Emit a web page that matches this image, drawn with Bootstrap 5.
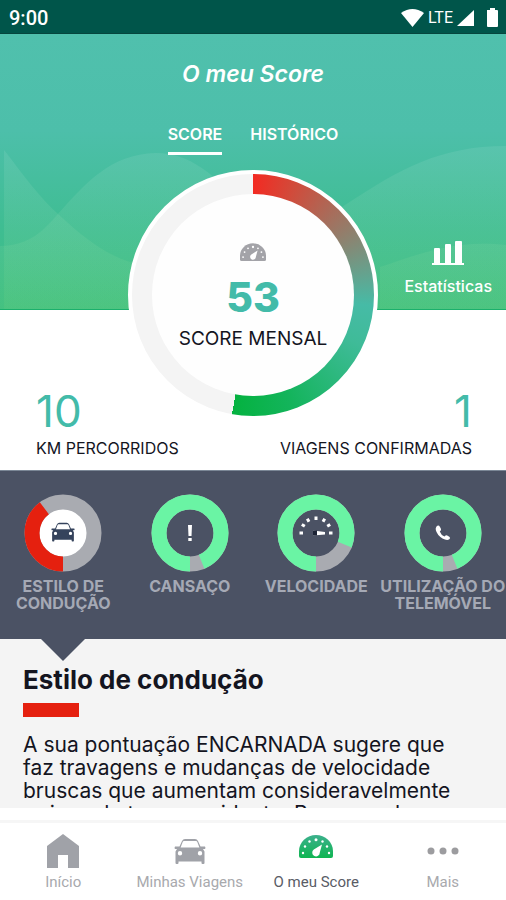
<!DOCTYPE html>
<html lang="pt">
<head>
<meta charset="utf-8">
<meta name="viewport" content="width=device-width, initial-scale=1">
<title>O meu Score</title>
<link href="https://cdn.jsdelivr.net/npm/bootstrap@5.3.0/dist/css/bootstrap.min.css" rel="stylesheet">
<style>
body { font-family: Inter, "Noto Sans", sans-serif; color: #14151f; }
button { font: inherit; }
.status-bar { background: #00554a; height: 34px; font-family: Roboto, sans-serif; font-size: 16px; padding: 2px 7px 0 9px; border-bottom: 1px solid #06463e; }
.clock { font-size: 20px; font-weight: 500; }
.hero-bg { height: 276px; z-index: 0; }
.hero-body { z-index: 1; }
.screen-title { font-size: 23px; font-weight: 600; font-style: italic; line-height: 28px; padding-top: 26px; }
.score-tabs { gap: 28px; padding-top: 32px; }
.score-tab { font-size: 16px; font-weight: 600; line-height: 28px; padding-bottom: 4px; border-bottom: 3px solid transparent; text-decoration: none; }
.score-tab.active { border-color: #fff; }
.dial-row { display: grid; grid-template-columns: 1fr auto 1fr; margin-top: 15px; }
.dial { width: 250px; height: 250px; border: 4px solid #fff; background: conic-gradient(#f32a22 0deg, #d24a3a 20deg, #8b8471 60deg, #46bba6 95deg, #3fbb98 115deg, #14b45c 160deg, #04b240 190deg, #f4f4f4 190deg); padding: 20px; }
.dial-face { background: #fefefe; padding-top: 49px; }
.dial-value { font-size: 41px; font-weight: 800; line-height: 46px; color: #43bba9; margin-top: 12px; }
.dial-label { font-size: 19px; line-height: 26px; margin-top: 6px; }
.stats-link { font-size: 16px; font-weight: 500; line-height: 20px; padding: 0 14px 56px 0; align-self: center; }
.totals { padding: 0 34px 9px 36px; margin-top: -33px; }
.total-value { font-size: 44px; line-height: 48px; color: #43bba9; }
.total-label { font-size: 16px; line-height: 26px; }
.factors { background: #4b5264; border-top: 1px solid #7b8796; padding: 23px 0 26px; }
.factor { color: #a5a9b5; font-size: 16px; font-weight: 700; line-height: 17px; flex: 1 1 0; min-width: 0; white-space: nowrap; }
.factor svg { margin-bottom: 6px; }
.factor span { margin-bottom: 1px; }
.pointer { left: 0; width: 25%; top: 100%; z-index: 2; }
.detail { background: #f4f4f4; padding: 24px 23px 0; }
.detail-title { font-size: 26px; font-weight: 700; line-height: 34px; }
.level { width: 56px; height: 14px; background: #e5200f; margin-top: 6px; }
.detail-text { font-size: 21px; line-height: 23px; margin-top: 16px; white-space: nowrap; }
.tab-bar { font-family: Roboto, sans-serif; font-size: 15px; line-height: 20px; margin-top: 12px; border-top: 3px solid #f6f6f6; padding: 9px 0 8px; color: #a8a9ad; }
.tab-item { flex: 1 1 0; color: inherit; text-decoration: none; white-space: nowrap; }
.tab-item svg { margin-bottom: 2px; }
.tab-item.active { color: #595c66; }
</style>
<script src="https://cdn.jsdelivr.net/npm/bootstrap@5.3.0/dist/js/bootstrap.bundle.min.js"></script>
</head>
<body class="vh-100 d-flex flex-column overflow-hidden bg-white">
<svg width="0" height="0" class="position-absolute" aria-hidden="true">
  <symbol id="car" viewBox="0 0 32 28">
    <path fill-rule="evenodd" d="M8 3Q9 1 11 1H21Q23 1 24 3L26.500 8.500L31 8.500Q32 10 31 11H29L30.500 13.500V25Q30.500 26 29.500 26H28.500Q27.500 26 27.500 25V23.500H4.500V25Q4.500 26 3.500 26H2.500Q1.500 26 1.500 25V13.500L3 11H1Q0 10 1 8.500L5.500 8.500ZM10 3Q9 3 8.700 4L6.600 9.500H25.400L23.300 4Q23 3 22 3ZM6 13A2.200 2.200 0 1 0 6 17.400A2.200 2.200 0 1 0 6 13ZM26 13A2.200 2.200 0 1 0 26 17.400A2.200 2.200 0 1 0 26 13Z"/>
  </symbol>
  <symbol id="gauge" viewBox="0 0 34 24">
    <path d="M0 21V16A17 16 0 0 1 34 16V21Q34 23 32 23H2Q0 23 0 21Z"/>
    <g fill="#fff"><circle cx="4" cy="18" r="1.200"/><circle cx="6" cy="11.500" r="1.200"/><circle cx="10.500" cy="6.500" r="1.200"/><circle cx="17" cy="4.800" r="1.500"/><circle cx="23.500" cy="6.500" r="1.200"/><circle cx="28" cy="11.500" r="1.200"/><circle cx="30" cy="18" r="1.200"/>
    <path d="M23 9.500L20.800 17.500A3.800 3.800 0 1 1 14.800 14.500Z"/></g>
  </symbol>
</svg>

<header class="status-bar flex-shrink-0 d-flex align-items-center justify-content-between text-white">
  <span class="clock">9:00</span>
  <span class="d-flex align-items-center gap-1">
    <svg width="23" height="18" viewBox="0 0 23 18" fill="#fff" aria-hidden="true"><path d="M0 4Q11.500-4 23 4L11.500 18Z"/></svg>
    <span>LTE</span>
    <svg width="18" height="18" viewBox="0 0 18 18" fill="#fff" aria-hidden="true"><path d="M17 1V17H0Z"/></svg>
    <svg width="20" height="20" viewBox="0 0 20 20" fill="#fff" aria-hidden="true"><path d="M8 2H11V0H16V2H18Q19 2 19 3V18Q19 19 18 19H9Q8 19 8 18Z"/></svg>
  </span>
</header>

<main class="flex-grow-1 overflow-hidden">
  <section class="position-relative">
    <svg class="hero-bg position-absolute top-0 start-0 w-100" viewBox="0 0 506 276" preserveAspectRatio="none" aria-hidden="true">
      <defs>
        <linearGradient id="sky" x1="0" y1="0" x2="0" y2="1"><stop offset="0" stop-color="#50c0ad"/><stop offset=".35" stop-color="#4dbfaa"/><stop offset=".7" stop-color="#3fbd92"/><stop offset="1" stop-color="#3cbe80"/></linearGradient>
        <linearGradient id="wave" gradientUnits="userSpaceOnUse" x1="0" y1="114" x2="0" y2="276"><stop offset="0" stop-color="#fff" stop-opacity=".08"/><stop offset="1" stop-color="#90e080" stop-opacity=".1"/></linearGradient>
      </defs>
      <rect width="506" height="276" fill="url(#sky)"/>
      <g fill="url(#wave)">
        <path d="M0 212C30 212 45 195 58 180C85 150 110 120 156 119C190 119 215 140 250 180V276H0Z"/>
        <path d="M4 116C25 143 40 164 58 180C85 205 105 220 130 228C200 245 290 210 345 171C400 135 440 112 506 112V276H4Z"/>
        <path d="M380 233C420 220 455 205 506 211V276H380Z"/>
      </g>
      <rect y="275" width="506" height="1" fill="#1bb06c"/>
    </svg>
    <div class="hero-body position-relative">
      <h1 class="screen-title text-center text-white m-0">O meu Score</h1>
      <nav class="score-tabs d-flex justify-content-center" aria-label="Vistas">
        <a class="score-tab active text-white" href="#score">SCORE</a>
        <a class="score-tab text-white" href="#historico">HISTÓRICO</a>
      </nav>
      <div class="dial-row">
        <span></span>
        <div class="dial rounded-circle">
          <div class="dial-face rounded-circle h-100 d-flex flex-column align-items-center">
            <svg width="26" height="19" fill="#a3a3a8" aria-hidden="true"><use href="#gauge"/></svg>
            <span class="dial-value">53</span>
            <span class="dial-label">SCORE MENSAL</span>
          </div>
        </div>
        <a class="stats-link text-white text-decoration-none d-flex flex-column align-items-end" href="#estatisticas">
          <span class="d-flex flex-column align-items-center">
          <svg class="mb-2" width="34" height="30" viewBox="0 0 34 30" fill="#fff" aria-hidden="true"><path d="M3 11Q3 10 4 10H8Q9 10 9 11V25H14V7Q14 6 15 6H19Q20 6 20 7V25H24V4Q24 3 25 3H30Q31 3 31 4V25H33V27H1V25H3Z"/></svg>
          <span>Estatísticas</span></span>
        </a>
      </div>
      <div class="totals d-flex justify-content-between">
        <div><div class="total-value">10</div><div class="total-label">KM PERCORRIDOS</div></div>
        <div class="text-end"><div class="total-value">1</div><div class="total-label">VIAGENS CONFIRMADAS</div></div>
      </div>
    </div>
  </section>

  <section class="factors position-relative d-flex align-items-start text-center">
    <button type="button" class="factor btn border-0 p-0 d-flex flex-column align-items-center">
      <svg width="78" height="78" viewBox="0 0 78 78" aria-hidden="true"><circle cx="39" cy="39" r="31" fill="#fff" stroke="#a9abb1" stroke-width="15"/><circle cx="39" cy="39" r="31" fill="none" stroke="#e5200f" stroke-width="15" pathLength="360" stroke-dasharray="143 360" transform="rotate(90 39 39)"/><use href="#car" x="27" y="28" width="24" height="21" fill="#35435c"/></svg>
      <span>ESTILO DE<br>CONDUÇÃO</span>
    </button>
    <button type="button" class="factor btn border-0 p-0 d-flex flex-column align-items-center">
      <svg width="78" height="78" viewBox="0 0 78 78" aria-hidden="true"><circle cx="39" cy="39" r="31" fill="none" stroke="#a9abb1" stroke-width="15"/><circle cx="39" cy="39" r="31" fill="none" stroke="#6af4a4" stroke-width="15" pathLength="360" stroke-dasharray="338 360" transform="rotate(90 39 39)"/><path d="M37 31H41L40.500 42H37.500ZM37.300 44H40.700V47H37.300Z" fill="#fff"/></svg>
      <span>CANSAÇO</span>
    </button>
    <button type="button" class="factor btn border-0 p-0 d-flex flex-column align-items-center">
      <svg width="78" height="78" viewBox="0 0 78 78" aria-hidden="true"><circle cx="39" cy="39" r="31" fill="none" stroke="#a9abb1" stroke-width="15"/><circle cx="39" cy="39" r="31" fill="none" stroke="#6af4a4" stroke-width="15" pathLength="360" stroke-dasharray="292 360" transform="rotate(90 39 39)"/><g stroke="#fff" stroke-width="3"><path d="M22.500 39H26M24.800 30.500L27.800 32.300M30.300 24.800L32 27.800M39 22.500V26M47.700 24.800L46 27.800M53.200 30.500L50.200 32.300M52 39H55.500"/></g><path d="M36 36.500L48 38V40.500L36 41.500Z" fill="#fff"/><path d="M36 36.500H40V41.500H36Z" fill="#1d2436"/></svg>
      <span>VELOCIDADE</span>
    </button>
    <button type="button" class="factor btn border-0 p-0 d-flex flex-column align-items-center">
      <svg width="78" height="78" viewBox="0 0 78 78" aria-hidden="true"><circle cx="39" cy="39" r="31" fill="none" stroke="#a9abb1" stroke-width="15"/><circle cx="39" cy="39" r="31" fill="none" stroke="#6af4a4" stroke-width="15" pathLength="360" stroke-dasharray="338 360" transform="rotate(90 39 39)"/><path d="M32.500 32.500Q34.500 30.500 36 33L37 35Q37.500 36.300 35.800 37.500Q37 41 40.500 42.500Q42 40.800 43.200 41.500L45.300 42.700Q47 44 45.300 45.300Q43 47 38.500 44.500Q33 41 31.800 36Q31.300 34 32.500 32.500Z" fill="#fff"/></svg>
      <span>UTILIZAÇÃO DO<br>TELEMÓVEL</span>
    </button>
    <div class="pointer position-absolute d-flex justify-content-center"><svg width="44" height="22" viewBox="0 0 44 22" fill="#4b5264" aria-hidden="true"><path d="M0 0H44L22 22Z"/></svg></div>
  </section>

  <article class="detail h-100">
    <h2 class="detail-title m-0">Estilo de condução</h2>
    <div class="level"></div>
    <p class="detail-text mb-0">A sua pontuação ENCARNADA sugere que<br>faz travagens e mudanças de velocidade<br>bruscas que aumentam consideravelmente<br>o risco de ter um acidente. Recomendamos</p>
  </article>
</main>

<nav class="tab-bar flex-shrink-0 d-flex text-center" aria-label="Principal">
  <a class="tab-item d-flex flex-column align-items-center" href="#inicio"><svg width="34" height="38" viewBox="0 0 34 38" fill="#a0a2a8" aria-hidden="true"><path d="M17 2L33 14V36H22V23H12V36H1V14Z"/></svg>Início</a>
  <a class="tab-item d-flex flex-column align-items-center" href="#viagens"><svg width="34" height="38" viewBox="0 0 34 38" fill="#a0a2a8" aria-hidden="true"><use href="#car" x="1" y="6" width="32" height="28"/></svg>Minhas Viagens</a>
  <a class="tab-item active d-flex flex-column align-items-center" href="#score" aria-current="page"><svg width="34" height="38" viewBox="0 0 34 38" aria-hidden="true"><defs><linearGradient id="leaf" x1="0" y1="0" x2="0" y2="1"><stop offset="0" stop-color="#3cb08c"/><stop offset="1" stop-color="#0fb552"/></linearGradient></defs><use href="#gauge" y="3" width="34" height="24" fill="url(#leaf)"/></svg>O meu Score</a>
  <a class="tab-item d-flex flex-column align-items-center" href="#mais"><svg width="34" height="38" viewBox="0 0 34 38" fill="#9c9c9f" aria-hidden="true"><circle cx="5" cy="19" r="3.500"/><circle cx="17" cy="19" r="3.500"/><circle cx="29" cy="19" r="3.500"/></svg>Mais</a>
</nav>
</body>
</html>
